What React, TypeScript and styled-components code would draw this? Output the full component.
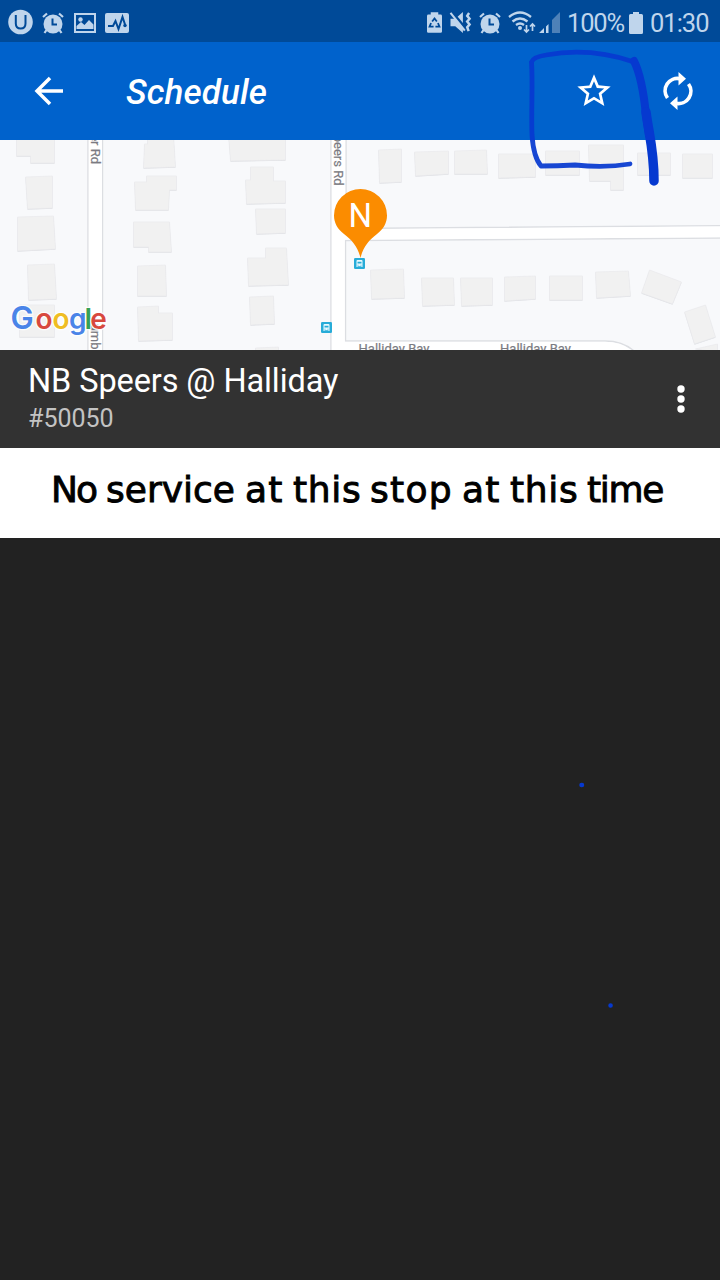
import React from 'react';
import styled, { createGlobalStyle } from 'styled-components';

const GlobalStyle = createGlobalStyle`
  * { box-sizing: border-box; }
  body { margin: 0; background: #222222; font-family: Roboto, sans-serif; }
`;

const Screen = styled.main`
  position: relative;
  display: flex;
  flex-direction: column;
  width: 720px;
  height: 1280px;
  overflow: hidden;
  background: #222222;
`;

const StatusBar = styled.header`
  display: flex;
  align-items: center;
  justify-content: space-between;
  height: 42px;
  padding: 3px 12px 0 8px;
  background: #004a98;
  color: #bfd5ec;
`;

const StatusGroup = styled.div<{ $gap: number }>`
  display: flex;
  align-items: center;
  gap: ${({ $gap }) => $gap}px;
`;

const StatusText = styled.span<{ $width: number; $tracking: number }>`
  width: ${({ $width }) => $width}px;
  font-size: 25.5px;
  line-height: 38px;
  letter-spacing: ${({ $tracking }) => $tracking}px;
  white-space: nowrap;
`;

const Glyph = styled.svg<{ $shift?: number }>`
  display: block;
  flex: none;
  margin-left: ${({ $shift = 0 }) => $shift}px;
  overflow: visible;
`;

const Toolbar = styled.nav`
  display: flex;
  align-items: center;
  height: 98px;
  padding: 0 24px 0 31px;
  background: #0062cc;
  color: #ffffff;
`;

const Title = styled.h1`
  flex: 1;
  margin: 4px 0 0 59px;
  font-size: 35px;
  font-weight: 500;
  font-style: italic;
  line-height: 44px;
  letter-spacing: 0.1px;
`;

const IconButton = styled.button<{ $gap?: number }>`
  display: flex;
  margin: 0 ${({ $gap = 0 }) => $gap}px 0 0;
  padding: 0;
  border: 0;
  background: none;
  color: inherit;
`;

const MapView = styled.section`
  height: 210px;
  overflow: hidden;
  background: #f8f9fb;
`;

const MapCanvas = styled.svg`
  display: block;
  font-family: Roboto, sans-serif;
`;

const StopBar = styled.section`
  display: flex;
  align-items: center;
  justify-content: space-between;
  height: 98px;
  padding: 0 35px 0 28px;
  background: #323232;
`;

const StopDetails = styled.div`
  display: flex;
  flex-direction: column;
`;

const StopName = styled.h2`
  margin: 0;
  color: #ffffff;
  font-size: 32.5px;
  font-weight: 400;
  line-height: 40px;
  letter-spacing: -0.1px;
`;

const StopNumber = styled.span`
  color: #c3c3c3;
  font-size: 25px;
  line-height: 36px;
`;

const Message = styled.p`
  display: flex;
  align-items: center;
  height: 90px;
  margin: 0;
  padding: 0 0 8px 51px;
  background: #ffffff;
  color: #000000;
  font-family: 'DejaVu Sans', sans-serif;
  font-size: 36px;
  -webkit-text-stroke: 0.9px #000000;
`;

const Word = styled.span<{ $width: number; $tracking: number }>`
  flex: none;
  width: ${({ $width }) => $width}px;
  letter-spacing: ${({ $tracking }) => $tracking}px;
  white-space: pre;
`;

const Ink = styled.svg`
  position: absolute;
  inset: 0;
  pointer-events: none;
`;

const words: [string, number, number][] = [
  ['No', 55, -2],
  ['service', 139, 0],
  ['at', 48, 1.2],
  ['this', 77, 0.7],
  ['stop', 92, 1.3],
  ['at', 48, 1.2],
  ['this', 77, 0.7],
  ['time', 80, -1.3],
];

const buildings = [
  'M16 135H54V163H30V156H16Z',
  'M25 177L52 176V208L27 209Z',
  'M17 217L53 216L55 249L17 251Z',
  'M27 265L54 264L56 299L28 300Z',
  'M19 305H54V337H19Z',
  'M144 144H147V135H173L175 167L143 168Z',
  'M134 182H146V176H176V190H169L168 210H135Z',
  'M133 222H169L171 252H148V247H133Z',
  'M137 266L165 265L166 296H137Z',
  'M137 307L158 306V313H172V340L138 341Z',
  'M228 135H285V160L230 161Z',
  'M245 180H250V167H273V181H285V203L246 204Z',
  'M255 209H285V233L256 234Z',
  'M247 258H265V248H286L288 285L248 286Z',
  'M249 297L273 296L274 324L250 325Z',
  'M255 348L278 347V355H255Z',
  'M378 150L401 149V182L379 183Z',
  'M414 152L448 151V174L415 176Z',
  'M454 151L486 150L487 174H454Z',
  'M498 154H535V177L498 178Z',
  'M545 151H579V175H545Z',
  'M588 145H623V190H610V181H589Z',
  'M637 153H670V175H637Z',
  'M682 154H712V178H682Z',
  'M370 270L403 269L404 298L371 299Z',
  'M421 278H453L454 305L422 306Z',
  'M460 278H492V305L461 306Z',
  'M504 277L535 276V299L504 301Z',
  'M549 276H582V300H549Z',
  'M595 272L628 271L630 296L596 298Z',
  'M649 270L681 282L672 304L641 293Z',
  'M684 312L705 305L715 337L694 344Z',
  'M695 349L717 344V352Z',
];

const Building = ({ d }: { d: string }) => (
  <>
    <path d={d} fill="#dcdee2" transform="translate(0.500 0.700)" />
    <path d={d} fill="#f1f1f1" stroke="#e9eaec" strokeWidth="0.700" transform="translate(0.500 0)" />
  </>
);

const BusStop = ({ x, y }: { x: number; y: number }) => (
  <g transform={`translate(${x} ${y})`}>
    <rect width="11" height="11" rx="1.3" fill="#27acd8" />
    <path d="M2.5 9V3Q2.5 2 3.5 2h4Q8.500 2 8.500 3V9H7.500V8.300H3.500V9Z" fill="#e9faff" />
    <path d="M3.500 3.700h4v1.900h-4zM3.500 6.700h1v.8h-1zM6.500 6.700h1v.8h-1z" fill="#27acd8" />
  </g>
);

const Alarm = () => (
  <Glyph width="22" height="22" viewBox="0 0 22 22">
    <circle cx="11" cy="12" r="9.500" fill="currentColor" />
    <path d="M1 5L5 1.500M17 1.500L21 5M4.500 18L2.500 21M17.500 18L19.500 21" stroke="currentColor" strokeWidth="2.200" />
    <path d="M10.500 6.500V12.500H15" fill="none" stroke="#004a98" strokeWidth="2" />
  </Glyph>
);

const googleLetters: [string, number, number, string][] = [
  ['G', 10.5, 31, '#4a84e8'],
  ['o', 35.5, 28, '#d8493e'],
  ['o', 52.5, 28, '#efbd23'],
  ['g', 69, 28, '#4a84e8'],
  ['l', 84.5, 29, '#36a155'],
  ['e', 90.2, 28, '#d8493e'],
];

export default function App() {
  return (
    <Screen>
      <GlobalStyle />
      <StatusBar>
        <StatusGroup $gap={9}>
          <Glyph width="25" height="25" viewBox="0 0 25 25">
            <circle cx="12.500" cy="12" r="12.300" fill="currentColor" />
            <path d="M7.800 5V13.500Q7.800 18.500 12.700 18.500Q17.500 18.500 17.500 13.500V5" fill="none" stroke="#004a98" strokeWidth="2" />
          </Glyph>
          <Alarm />
          <Glyph width="22" height="20" viewBox="0 0 22 20" $shift={1}>
            <rect x="1" y="1" width="20" height="18" fill="none" stroke="currentColor" strokeWidth="2" />
            <circle cx="6.500" cy="6.500" r="2.200" fill="currentColor" />
            <path d="M2.500 16V13L7 9L10.500 12L15 7L19.500 11.500V16Z" fill="currentColor" />
          </Glyph>
          <Glyph width="24" height="20" viewBox="0 0 24 20">
            <rect width="24" height="20" rx="2" fill="currentColor" />
            <path d="M3 13H8L10.500 8L13.500 16L17.500 4L20.500 13" fill="none" stroke="#004a98" strokeWidth="2" />
            <circle cx="20" cy="12.500" r="1.700" fill="#004a98" />
          </Glyph>
        </StatusGroup>
        <StatusGroup $gap={7}>
          <Glyph width="15" height="21" viewBox="0 0 16 22">
            <path d="M0 4Q0 2.500 1.500 2.500H4V0H12V2.500H14.500Q16 2.500 16 4V20.500Q16 22 14.500 22H1.500Q0 22 0 20.500Z" fill="currentColor" />
            <path d="M5.500 10L8 6.800L10.500 10M4.300 11.500L2.700 15.500H7M11.700 11.500L13.300 15.500H9" fill="none" stroke="#004a98" strokeWidth="1.900" />
          </Glyph>
          <Glyph width="22" height="21" viewBox="0 0 22 22" $shift={1}>
            <path d="M0 7H5L13 0V22L5 15H0Z" fill="currentColor" />
            <path d="M1 -0.500L16 17.500" stroke="#004a98" strokeWidth="3" />
            <path d="M0 1L15 19.500" stroke="currentColor" strokeWidth="2.200" />
            <path d="M19.500 1L17.500 4L20 7L17.500 10L20 13L17.500 16L19 20" fill="none" stroke="currentColor" strokeWidth="2.600" />
          </Glyph>
          <Alarm />
          <Glyph width="28" height="22" viewBox="0 0 28 22">
            <path d="M1 5Q12 -4 23 5M4.500 9.500Q12 3.500 19.500 9.500M8 13Q12 10 16 13" fill="none" stroke="currentColor" strokeWidth="2.300" />
            <circle cx="12" cy="16" r="2" fill="currentColor" />
            <path d="M18.500 13V20M16 17.500L18.500 20L21 17.500M24.500 19V12M22 14.500L24.500 12L27 14.500" fill="none" stroke="currentColor" strokeWidth="1.700" />
          </Glyph>
          <Glyph width="21" height="21" viewBox="0 0 21 21" $shift={-4}>
            <path d="M0 21L5 16V21ZM7 21V14.500L9.500 12V21Z" fill="currentColor" />
            <path d="M13 21V8L21 0V21Z" fill="#4e81b8" />
          </Glyph>
          <StatusText $width={55} $tracking={-1.2}>100%</StatusText>
          <Glyph width="14" height="22" viewBox="0 0 14 22">
            <path d="M0 3.500Q0 2 1.500 2H4V0H10V2H12.500Q14 2 14 3.500V20.500Q14 22 12.500 22H1.500Q0 22 0 20.500Z" fill="currentColor" />
          </Glyph>
          <StatusText $width={58} $tracking={-1}>01:30</StatusText>
        </StatusGroup>
      </StatusBar>

      <Toolbar>
        <IconButton aria-label="Back">
          <Glyph width="36" height="36" viewBox="0 0 36 36">
            <path d="M32 18H6M19 5L6 18L19 31" fill="none" stroke="currentColor" strokeWidth="3.500" />
          </Glyph>
        </IconButton>
        <Title>Schedule</Title>
        <IconButton aria-label="Favourite" $gap={46}>
          <Glyph width="40" height="40" viewBox="0 0 24 24">
            <path fill="currentColor" d="M22 9.240l-7.190-.62L12 2 9.190 8.630 2 9.240l5.460 4.730L5.820 21 12 17.270 18.180 21l-1.630-7.030L22 9.240zM12 15.400l-3.760 2.270 1-4.280-3.320-2.880 4.380-.38L12 6.100l1.710 4.040 4.380.38-3.320 2.880 1 4.280L12 15.400z" />
          </Glyph>
        </IconButton>
        <IconButton aria-label="Refresh">
          <Glyph width="36" height="40" viewBox="0 0 36 40">
            <path d="M7.500 27A12.300 12.300 0 0 1 20 7.700M28.500 13A12.300 12.300 0 0 1 16 32.300" fill="none" stroke="currentColor" strokeWidth="3.700" />
            <path d="M18.500 1L26 7.800L18.500 14.500ZM17.500 25.500L10 32.200L17.500 39Z" fill="currentColor" />
          </Glyph>
        </IconButton>
      </Toolbar>

      <MapView>
        <MapCanvas width="720" height="210" viewBox="0 140 720 210">
          <path d="M88 130V360H102.500V130M331 130V360H700M346 130V228.500L730 225.500V238L345.500 240.500V341H605Q626 341 638 355" fill="none" stroke="#dcdee2" strokeWidth="1.400" />
          <path d="M88.700 130H102V360H88.700ZM331.700 130H345.300V229.200L730 226.300V237.300L344.800 239.800V341.800H605Q624 341.800 637 355H331.700Z" fill="#ffffff" />
          {buildings.map((d) => <Building key={d} d={d} />)}
          <g fill="#7b7b82" fontSize="13" fontWeight="400" stroke="#7b7b82" strokeWidth="0.2">
            <text transform="translate(91 164) rotate(90)" textAnchor="end">er Rd</text>
            <text transform="translate(333.500 185.500) rotate(90)" textAnchor="end">Speers Rd</text>
            <text transform="translate(91 349.500) rotate(90)" textAnchor="end">umb</text>
            <text x="358.500" y="353" textLength="71">Halliday Bay</text>
            <text x="500" y="353" textLength="71">Halliday Bay</text>
          </g>
          <BusStop x={354} y={258} />
          <BusStop x={321} y={322} />
          <path d="M360.500 258C358 247 352 240 344 234C337.500 229 334 223 334 215.500A26.500 26.500 0 0 1 387 215.500C387 223 383.500 229 377 234C369 240 363 247 360.500 258Z" fill="#fb8c00" />
          <text x="360.300" y="227" textAnchor="middle" fill="#ffffff" fontSize="33" fontWeight="400">N</text>
          <text fontFamily="Inter, sans-serif" fontWeight="600" stroke="#ffffff" strokeWidth="2.500" strokeOpacity="0.850" paintOrder="stroke">
            {googleLetters.map(([letter, x, size, fill], i) => (
              <tspan key={i} x={x} y="329" fontSize={size} fill={fill}>{letter}</tspan>
            ))}
          </text>
        </MapCanvas>
      </MapView>

      <StopBar>
        <StopDetails>
          <StopName>NB Speers @ Halliday</StopName>
          <StopNumber>#50050</StopNumber>
        </StopDetails>
        <IconButton aria-label="More options">
          <Glyph width="8" height="28" viewBox="0 0 8 28" fill="#ffffff">
            <circle cx="4" cy="4" r="3.700" />
            <circle cx="4" cy="14" r="3.700" />
            <circle cx="4" cy="24" r="3.700" />
          </Glyph>
        </IconButton>
      </StopBar>

      <Message>
        {words.map(([word, width, tracking], i) => (
          <Word key={i} $width={width} $tracking={tracking}>{word + ' '}</Word>
        ))}
      </Message>

      <Ink width="720" height="1280" viewBox="0 0 720 1280" fill="none" stroke="#0639d0" strokeLinecap="round" strokeLinejoin="round">
        <path d="M634 62Q590 47 546 55Q533 57 531.500 62C533 85 531 110 532 135C533 150 536 160 541 166Q557 166 575 165Q605 168 630 164" strokeWidth="4.800" opacity="0.93" />
        <path d="M634 61C641 75 644 95 646 115L649 135" strokeWidth="8" />
        <path d="M646 112C649 135 654 150 654 181" strokeWidth="9.500" />
        <path d="M581.500 785h.5M610.500 1005.500h.1" strokeWidth="4.500" />
      </Ink>
    </Screen>
  );
}
